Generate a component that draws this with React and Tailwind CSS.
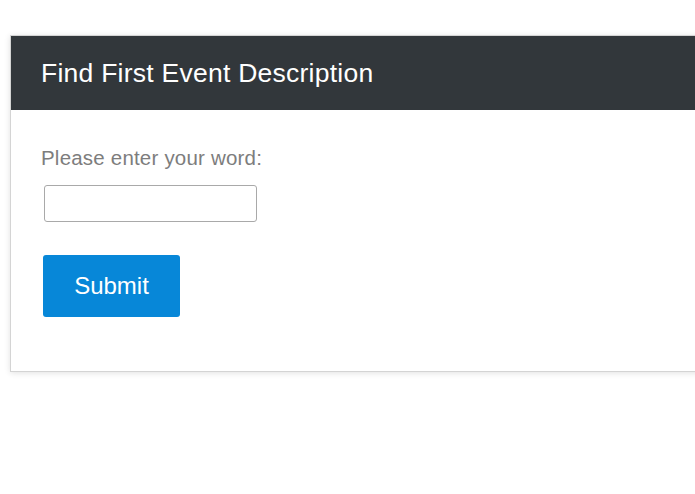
export default function App() {
  return (
    <div className="h-[494px] w-[695px] overflow-hidden bg-white pt-[35px] pl-[10px]" style={{ fontFamily: '"Liberation Sans", Arial, sans-serif' }}>
      <div className="w-[700px] border border-[#d4d4d4] bg-white shadow-[0_1px_6px_rgba(0,0,0,0.12)]">
        <div className="flex h-[74px] items-center bg-[#32373b] pl-[30px]">
          <h1 className="text-[26.5px] leading-none tracking-[0.25px] text-white">Find First Event Description</h1>
        </div>
        <div className="pl-[30px] pt-[37px] pb-[54px]">
          <label className="block h-[21px] text-[20.5px] leading-[21px] tracking-[0.2px] text-[#7d7d7d]">Please enter your word:</label>
          <input type="text" className="mt-[17px] ml-[3px] block h-[37px] w-[213px] rounded-[3px] border border-[#a9a9a9] bg-white" />
          <button className="mt-[33px] ml-[2px] flex h-[62px] w-[137px] items-center justify-center rounded-[3px] bg-[#0787d8] text-[24px] text-white">Submit</button>
        </div>
      </div>
    </div>
  );
}
